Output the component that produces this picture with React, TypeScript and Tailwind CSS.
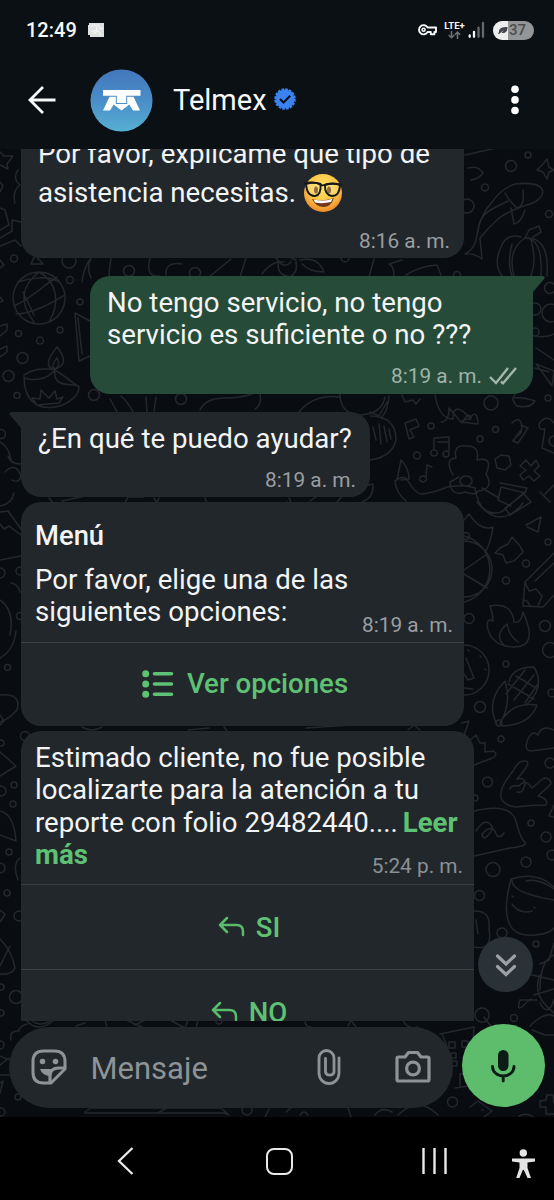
import type { ReactNode } from 'react';

function StatusBar() {
  return (
    <div className="flex h-[60px] items-center pl-[26px] pr-[20px]">
      <span className="w-[52px] whitespace-nowrap text-[20px] font-medium leading-6">12:49</span>
      <svg className="ml-[10px]" width="17" height="16" viewBox="0 0 17 16">
        <path d="M1 1h15v14H2v-2H0V3h1z" fill="#e0e1e1" />
        <path d="M2 4l6-1 1 5-6 2M10 2l2 5 3-1M5 12l5-3 3 4" stroke="#f4f4f4" strokeWidth="1.2" fill="none" />
      </svg>
      <svg className="ml-auto" width="20" height="14" viewBox="0 0 20 14" fill="none" stroke="#f5f6f7">
        <path d="M9.6 4.5H18V9h-1.6v2.3h-3.6V9H9.6A4.6 4.6 0 1 1 9.6 4.5Z" strokeWidth="1.9" strokeLinejoin="round" />
        <circle cx="5.6" cy="6.8" r="1.5" strokeWidth="1.6" />
      </svg>
      <div className="ml-[5px] flex w-[23px] flex-col items-center">
        <span className="text-[9.5px] font-bold leading-[10px]">LTE+</span>
        <svg width="13" height="8" viewBox="0 0 13 8" fill="none" stroke="#6f7376" strokeWidth="1.5">
          <path d="M3.5 0v6.5M.7 4l2.8 2.8L6.3 4M9.5 8V1.2M6.9 3.8l2.6-2.7 2.7 2.7" />
        </svg>
      </div>
      <svg className="ml-[2px]" width="17" height="18" viewBox="0 0 17 18" strokeWidth="2.3" strokeLinecap="round">
        <path d="M1.7 14.5v1.3M6 10.8v5" stroke="#f5f6f7" />
        <path d="M10.5 6.6v9.2M15 2v13.8" stroke="#66696c" />
      </svg>
      <div className="ml-[8px] flex h-[19px] w-[41px] items-center overflow-hidden rounded-full bg-[#939596] text-[#4b4e50]">
        <div className="flex h-full w-[15px] items-center justify-end bg-[#eceded]">
          <svg width="10" height="9" viewBox="0 0 10 9">
            <path d="M1 6C1 2 4 1 9.5 1 9.5 5 8 7.5 3.5 7L6 4 1 8H0z" fill="#42464a" />
          </svg>
        </div>
        <span className="pl-[1px] text-[15px] font-medium leading-[19px]">37</span>
      </div>
    </div>
  );
}

function Header() {
  return (
    <header className="flex h-[89px] items-center pb-[9px] pl-[28px]">
      <svg width="28" height="28" viewBox="0 0 28 28" fill="none" stroke="#f7f8f8" strokeWidth="2.8">
        <path d="M27.5 14H2M15 1L2 14l13 13" />
      </svg>
      <svg className="ml-[34px]" width="63" height="63" viewBox="0 0 63 63">
        <defs>
          <linearGradient id="avatar" x1="0" y1="0" x2="0" y2="1">
            <stop offset="0" stopColor="#4377bd" />
            <stop offset="0.5" stopColor="#4a8dc8" />
            <stop offset="1" stopColor="#56b0d3" />
          </linearGradient>
        </defs>
        <circle cx="31.5" cy="31.5" r="31" fill="url(#avatar)" />
        <path d="M13 21h37.5v5.7H36.2V34h-9.4v-7.3H13z" fill="#fff" />
        <path d="M19.5 27.8h6.3V35h11.400v-7.200h6.300L50 41.500h-7L39.300 35.500l-7.800 6-7.800-6L20 41.500h-7z" fill="#fff" />
      </svg>
      <h1 className="ml-[20px] w-[97px] whitespace-nowrap text-[29px] font-normal leading-9">Telmex</h1>
      <svg className="ml-[4px] mt-[-3px]" width="22" height="22" viewBox="0 0 22 22">
        <circle cx="11" cy="11" r="9.6" fill="#3b82f0" />
        <circle cx="11" cy="11" r="9.7" fill="none" stroke="#3b82f0" strokeWidth="2.2" strokeDasharray="2.6 1.21" />
        <path d="M6 11l3.5 3.5 6.7-6.8" fill="none" stroke="#0c1116" strokeWidth="2.1" />
      </svg>
      <svg className="ml-auto mr-[35px]" width="8" height="30" viewBox="0 0 8 30" fill="#fff">
        <circle cx="4" cy="4.2" r="3.8" />
        <circle cx="4" cy="14.9" r="3.8" />
        <circle cx="4" cy="25.5" r="3.8" />
      </svg>
    </header>
  );
}

const dots: [number, number, number][] = [
  [14, 258.5, 3.5], [69, 261, 7], [70, 280, 3.5], [80, 302, 3], [129, 271, 5.5], [195, 273, 5.5],
  [18.5, 333.5, 3], [40, 340.5, 3.5], [60, 330, 3], [22.5, 358, 5.5], [8.5, 376, 5.5], [17, 395.5, 3],
  [94, 395, 5.5], [181, 399, 5.5], [345, 258, 4], [457, 275, 3.5], [511, 166, 5.5], [528, 155, 3],
  [485, 187.5, 3.5], [549, 214, 3.5], [467, 206, 7], [550, 288, 5.5], [551, 313, 9], [535, 309, 6],
  [535, 332, 4], [491, 403, 7], [548, 398, 3], [431, 426, 3], [417, 455.5, 3.5], [480, 439, 3],
  [495.5, 429.5, 3], [548, 542, 3], [526, 563.5, 3.5], [506, 580.5, 3.5], [469, 618.5, 5],
  [545, 626, 5.5], [550, 650, 7.5], [506, 664, 3], [480, 707, 5.5], [466, 536, 3.5],
  [1, 434, 4.5], [0, 573, 5], [20, 571, 4], [20, 616, 3.5], [7.5, 667.5, 3], [25, 736, 4.5],
  [1, 743, 3], [14, 785, 3], [13, 804, 3], [1, 791, 5], [9, 852, 3], [0, 868, 5], [7, 893, 3],
  [19, 916, 5], [1, 987, 3], [16, 997, 6.5], [1, 1013, 3], [0, 1045, 4], [18, 1097, 3], [1, 1112, 4],
  [247, 1110, 5], [219, 1021, 3], [501, 739, 3], [487.5, 782, 5], [475, 798, 3], [550, 763, 5],
  [531, 823, 3], [546, 837, 5], [526, 862, 5], [493, 869.5, 7], [479.5, 895.5, 5], [502, 933, 5],
  [536, 944, 3], [514, 1018, 3.5], [452.5, 1102, 5], [499, 723, 3], [552, 855, 5], [552, 693, 4],
];

const doodles = [
  // star, fish tail and leaves down the left edge
  'M0 152L4 156 13 156 7 164 8 169 0 165M0 182L3 186 0 192M0 208L5 210 9 225 0 230M0 238L12 231 12 220 21 222M0 246L15 240 21 246M18 170q-6 8 2 15q-8 6-5 18',
  'M0 260l4 5-4 3M31 264l4-9 8 9-4 0-8 0M0 297l3 4-3 1M0 326l7-2v6l-7 6M0 349l7-3v6l-7 5',
  // globe
  'M39 272a26 26 0 1 0 .1 0M18 282C30 278 48 275 59 282M14 306C32 298 45 284 57 277M16 314C33 314 53 302 65 295M39 272C22 285 18 302 34 322M39 272C58 282 60 304 49 322M23 292l11 23',
  'M90 321L75 313 79 361 90 356M78 318l4 36',
  // diya lamp
  'M57 347C48 358 44 368 55 369C66 366 66 358 57 347M57 358q-7 8-2 11q6-3 2-11M24 375C38 366 46 370 53 369C60 372 74 384 79 387C79 407 24 425 24 377C25 380 45 383 55 370C52 390 75 382 79 387M32 398l8 1 1-9 8 8 6-7 2 8 6-2-4 6-22 2z',
  'M82 282Q84 266 91 258M111 258q-2 14-2 20M91 258q-5 10 0 20M150 258q-5 19 9 18M166 275q-1-14 16-11M209 277l22-18M240 277l6-19M262 274q10-14 22-12',
  'M296 260q-10-6-20-2q8 12 15 4M300 260q18-4 24 12q-14 0-22-8M296 262q2 10-5 14M291 277q-16-2-12-16M369 277l5-18M394 276q0-10-5-12l13-4M406 275q14-9 31-10l4 10',
  // koi fish and pumpkin
  'M465 155L523 142M468 168q10-3 15 5q-4 6-12 7M465 254Q476 248 477 235Q480 215 492 202Q502 188 515 184C550 180 548 198 530 204Q510 210 499 218Q488 228 480 238L482 259Q474 253 465 254M505 193q4 8 12 15q8-2 6-18M511 208l3 16q7-1 11-14M478 232q0-16 16-24l14-7',
  'M521 237q-15-4-20 10Q493 264 502 276M525 238q-18 12-11 38M525 238q18 0 16 38M525 238q25-2 22 38M525 238L529 230 539 226 541 232 533 237M512 244q-5 20 0 32M531 240q6 20 0 36M543 164l4-5 2 8 5 3-5 2-2 7-4-7-6-2z',
  'M535 336q12 2 19-2M536 348l18 12M536 364l18 7-2 15-7-10zM535 368l14 4',
  // shells and cup between bubbles
  'M117 412l-7-13M121 396q7 6 12 16M147 412l-1-15M156 397l-2 14M200 410q6-12 24-12q17 0 28-4M260 394q2 11-5 15M299 412q15-18 40-15M340 394q0 20 20 21q22-1 25-18M389 396q-1 15-8 22M370 412l9 4 8-14M402 395l3 7 8-2 3 4 4-5',
  'M435 395q4 24 18 24q0-20 18 0q-10 0-9 4q6-11 9-6q6-8 7 7l-17-2-12-14q0 14-8 14M515 398q8-1 20 3q-5 8-18 5q-7-7-2-11',
  'M370 416q26 0 26 24q-4 17-26 20M373 427l3 13M379 424l2 20M384 426l3 16M389 429l2 10',
  // music notes, squiggles and chef
  'M405 423l11-4 3 7-9 4 4 7-5 2zM434 450v-12l15-1v14M438 442h11M434 450a3.5 3 0 1 0 .1 0M446 451a3 3 0 1 0 .1 0M426 477l1-12 5 2M423 476a3.5 3 0 1 0 .1 0',
  'M512 423q8-8 10 3l-1 7-8 7M521 430l-8 11 5 2 10-15-7-3M501 455l8 1 2 9-6 5-8-2-2-9zM520 466l6-6 5 6 5-6 3 6-5 5 6 5-6 5-5-5-6 4-3-5 6-5zM554 423q-8-10-15 1q0 7 6 5l-3 19 12 5M554 436a5 5 0 1 0 .1 10M545 494l9-9M540 492l10 10',
  'M453 475q-9-16 3-17q-3-14 10-12q14-1 11 14q17-4 9 14q9 15-8 17q-2 5-13 1q-14 5-15-10l9-5M466 476a6 5 0 1 0 .1 0M397 480l4-20q8 8 8 19l-8 1M395 481q9-7 13 0q8 14 15 13q13-2 24-7q16-3 28 1q3 20 14 24q9 3 15-2l22-19M395 481q1 12 11 20M477 502q12 15 23 15q12 0 23-14M482 488l17 10M500 483l27 5-2 5-24-6-3 13 13 6M505 508l19-14 7 8-21 13z',
  'M464 520l5-6q12 18 24 13q-2 14-7 24M464 536a34 34 0 0 1 0 66M464 541a28 28 0 0 1 0 56M464 570l22-15M464 574l23 14M526 525l15-8-3 15-11-5M500 548l8-4 4-7 8 9 3 6-9 9-8 2-3-8-8-2z',
  // pencil, flame, clock and corn
  'M554 553l-29 29-2 24 20 1 11-12M525 582l4 9 7-2 6 7-4 10M535 581l19-18M523 600q6 0 7 7M490 606q22-4 24 16q7 2 9-10q16 35-9 35q-25-1-27-23q1-6 6-3q0-8-3-15M505 646q-12-10 2-22q2 12 11 18',
  'M464 645a25 25 0 0 1 0 50M464 688l9 1M466 658l8 20-6 2-6-9M468 650l1 1M480 656l1 1M485 669l1 1',
  'M497 725q-12-24 8-44q7 22-5 43M500 723q12-22 37-18q-7 20-35 21zM509 682q3-15 25-15q12 20-8 38M508 684l26 15M516 676l20 12M514 700l20-25M525 703l12-18M506 694l19-24',
  // left strip below the third bubble
  'M5 472q8-8 13-2l3 6q-2 8-9 4M0 442q9 5 11 18M21 464q-11 0-13-8M0 506q12-2 14-13M0 512l8-1 13 18M0 524l4 5 5-3 12 9M0 560l21-4M11 583q7 1 9 9M0 600q15 10 10 35M0 658q14-8 16-27M0 695q22-2 17 15q-8 9-17 12M0 715l4 6-4 4M0 752l16 14-16 10M0 811q14 3 16 30l-16-6M20 858q-8 6-2 22M0 910l5 4-5 8M0 939q12 12 15 29q-3 7-15 6M0 966l10-20M0 1065l9-7M0 1075h9M0 1083l3-2-3 12M11 1040q-2-10 8-9q-1-4 8-7M9 1060l-9-4',
  'M49 498l4 5M62 501l23-5M125 503l3-6 16 0M154 498l3 5 2-5M205 498l2 5M289 498q4 6-2 4M310 501l20-14q18-9 16 5l-9 10M352 490l20-6M362 502q12-4 11-18M82 727q10 6 20 0M188 730l21-2M224 727l3 4M306 728l46-3M408 730l6-5 6 5',
  // hands, hat and mug on the right strip
  'M462 723l7-2-6 17M470 740l6-5 4 8 5 0 0 9 9-1q5 5-4 8l-16 6M530 751q-7-2-1-14q4-7 9-2q4-11 16-5M554 748q-15 2-24 3M524 761q-6 0-11 10q-26 32 3 36q14-2 30-2q3-6-8-9l13-12q0-6-7-6l-12 10q-7-10-13-2q-8-1-9 3M524 761q10-1-7 18q8-2 8 5q-2 10-8 8',
  'M474 811q33-8 41 7q6 22 9 23q6 5-14 7L474 856M476 831q10-16 17-3q-9 16-11 6q11-12 15 2q4 2 7-3M554 805l-5 11 5 1',
  'M511 879q-16 60 24 56q14-1 19-7M511 879q26-8 43 8M512 880q-1 13 42 20M526 881q12-3 28 8M512 904q8 11 20 7M512 896l1 1M534 907l1 1M474 911q17-1 15 18q4 22-15 18M476 920l2 14',
  'M554 943l-5 17-9 4M540 990q0-30 14-35M532 975l22 5M534 995l20-6M540 975q-9 20 14 38M520 1000q-5 15 7 2l4-3M484 1017l9 12M482 1008a7 7 0 1 0 .1 0',
  // bottom strip around the composer
  'M26 1020q12 14 28 0M31 1020q10 8 20 0M76 1026l9-3M105 1020l2 8M126 1020l18 8M134 1025l12-5M170 1020l15 8 3-8M198 1020l-2 8M305 1021q0 6 6 6M348 1026l3-6 5 7M403 1020q4 10 15 7M85 1112l6-4h130l8 7-5-2H85M158 1113l10-6M265 1117l4-8M286 1112l6-5M348 1108l3 9M375 1115q7-9 17-3M398 1115q20-20 40 0M300 1115q4-6 8 0',
  'M440 1034l34-7-1 15M442 1034q5 10 7 20M449 1042h6v6h-6zM462 1041h6v6h-6zM451 1053h5v5h-5zM452 1061h5v5h-5M455 1088l13-2M460 1086v-12h5M530 1026q15-15 24-10M532 1030l13 5 9 0M540 1003q8 15 14-3M537 1000l-17 0',
  'M470 1107l8-6 14 10-8 6M540 1101l6-1 1-5 6 0 1 8M540 1101v6l6 0v7l8 0M519 1116q8-4 14 1M482 1110h1',
];

function Wallpaper() {
  return (
    <svg
      className="absolute inset-0"
      width="554"
      height="968"
      viewBox="0 149 554 968"
      fill="none"
      stroke="#24282c"
      strokeWidth="1.5"
      strokeLinejoin="round"
      strokeLinecap="round"
    >
      {dots.map(([x, y, r], i) => (
        <circle key={i} cx={x} cy={y} r={r} />
      ))}
      {doodles.map((d, i) => (
        <path key={i} d={d} />
      ))}
    </svg>
  );
}

function NerdEmoji() {
  return (
    <svg width="40" height="40" viewBox="0 0 40 40">
      <defs>
        <radialGradient id="face" cx="0.5" cy="0.35" r="0.65">
          <stop offset="0" stopColor="#fde46b" />
          <stop offset="0.6" stopColor="#fcc545" />
          <stop offset="1" stopColor="#ee8a2b" />
        </radialGradient>
      </defs>
      <circle cx="20" cy="20" r="19" fill="url(#face)" />
      <ellipse cx="13" cy="17" rx="2" ry="3.5" fill="#6b421b" />
      <ellipse cx="26" cy="17" rx="2" ry="3.5" fill="#6b421b" />
      <path d="M9 26q11 3 22-1-3 9-10.5 9T9 26Z" fill="#70351a" />
      <path d="M10.5 26.5q10 2.5 19-.8l-1.5 3.3q-8 2-16 .5Z" fill="#fff" />
      <g fill="#fff6c0" fillOpacity=".25" stroke="#17191b" strokeWidth="1.9">
        <path d="M3 11q7-2.5 14.5 0 1 11-5.5 12Q4 23.5 3 11ZM22 12q8-2.5 15 0-.5 11-8 11Q21.5 22 22 12Z" />
        <path d="M1 10.5q10-3 18.5 2 9-4 19.5-.5" fill="none" />
      </g>
    </svg>
  );
}

function Time({ children, color = 'text-[#9a9ea1]' }: { children: ReactNode; color?: string }) {
  return <span className={`whitespace-nowrap text-[20.8px] leading-6 ${color}`}>{children}</span>;
}

function QuickReply({ label }: { label: string }) {
  return (
    <button className="flex h-[84px] w-full shrink-0 items-center justify-center gap-[11px] pl-[3px] pt-[2px] text-[27.6px] font-medium leading-8 text-[#5fc173]">
      <svg className="-mt-[3px]" width="27" height="22" viewBox="0 0 27 22" fill="none" stroke="#5abb6c" strokeWidth="2.5" strokeLinecap="round" strokeLinejoin="round">
        <path d="M9 2L2 9l7 7M2 9h16.5q6.5 0 6.5 6.5V19" />
      </svg>
      {label}
    </button>
  );
}

function Messages() {
  return (
    <div className="relative flex h-[871.5px] flex-col items-start overflow-hidden text-[27.65px] leading-[32.4px] text-[#f2f4f5]">
      <div className="ml-[21px] h-[109px] w-[443px] shrink-0 rounded-b-[20px] bg-[#22272b] pl-[17px] pr-[14px]">
        <p className="-mt-[11px] whitespace-nowrap">Por favor, explícame que tipo de</p>
        <div className="mt-[3px] flex h-[40px] items-center gap-[7px]">
          <span className="whitespace-nowrap">asistencia necesitas.</span>
          <NerdEmoji />
        </div>
        <div className="mt-[16px] flex justify-end">
          <Time>8:16 a. m.</Time>
        </div>
      </div>

      <div className="relative ml-[90px] mt-[18px] h-[118px] w-[443px] shrink-0 rounded-[20px] rounded-tr-none bg-[#264b39] pl-[17px] pr-[16px] pt-[11px]">
        <svg className="absolute -right-[12px] top-0" width="13" height="20" viewBox="0 0 13 20">
          <path d="M0 0h11q3 1 1 3L1 16v4H0z" fill="#264b39" />
        </svg>
        <p className="whitespace-nowrap">No tengo servicio, no tengo<br />servicio es suficiente o no ???</p>
        <div className="mt-[12px] flex items-center justify-end gap-[7px]">
          <Time color="text-[#9fb3a9]">8:19 a. m.</Time>
          <svg width="28" height="18" viewBox="0 0 28 18" fill="none" stroke="#a3b5ac" strokeWidth="2.4">
            <path d="M1 10l6 6L19 1M12 14.5l2 1.8L27 1" />
          </svg>
        </div>
      </div>

      <div className="relative ml-[21px] mt-[18px] h-[85px] w-[349px] shrink-0 rounded-[20px] rounded-tl-none bg-[#22272b] pl-[17px] pr-[14px] pt-[11px]">
        <svg className="absolute -left-[12px] top-0" width="13" height="20" viewBox="0 0 13 20">
          <path d="M13 0H2q-3 1-1 3l11 13v4h1z" fill="#22272b" />
        </svg>
        <p className="whitespace-nowrap">¿En qué te puedo ayudar?</p>
        <div className="mt-[13px] flex justify-end">
          <Time>8:19 a. m.</Time>
        </div>
      </div>

      <div className="ml-[21px] mt-[5px] h-[224px] w-[443px] shrink-0 rounded-[20px] bg-[#22272b]">
        <div className="h-[141px] border-b-[1.5px] border-[#3b4044] pl-[14px] pr-[11px] pt-[18px]">
          <h2 className="text-[27.4px] font-medium leading-8">Menú</h2>
          <div className="mt-[12px] flex h-[73px] justify-between">
            <p className="whitespace-nowrap">Por favor, elige una de las<br />siguientes opciones:</p>
            <div className="-ml-6 flex items-end">
              <Time>8:19 a. m.</Time>
            </div>
          </div>
        </div>
        <button className="flex h-[82px] w-full items-center justify-center gap-[13px] pl-[5px] text-[27.6px] font-medium leading-8 text-[#5fc173]">
          <svg width="32" height="28" viewBox="0 0 32 28" fill="#5fc173">
            <circle cx="3.7" cy="3.7" r="3.5" />
            <circle cx="3.7" cy="14" r="3.5" />
            <circle cx="3.7" cy="24.3" r="3.5" />
            <path d="M12.5 3.7h17M12.5 14h17M12.5 24.3h17" stroke="#5fc173" strokeWidth="3.6" strokeLinecap="round" />
          </svg>
          <span className="whitespace-nowrap">Ver opciones</span>
        </button>
      </div>

      <div className="ml-[21px] mt-[5px] w-[453px] shrink-0 rounded-t-[20px] bg-[#22272b]">
        <div className="h-[154px] border-b-[1.5px] border-[#3b4044] pl-[14px] pr-[11px] pt-[11px]">
          <p className="whitespace-nowrap">
            Estimado cliente, no fue posible<br />
            localizarte para la atención a tu<br />
            reporte con folio 29482440.... <b className="-ml-[2px] font-bold text-[#5fc173]">Leer</b><br />
            <b className="font-bold text-[#5fc173]">más</b>
          </p>
          <div className="-mt-[18px] flex justify-end">
            <Time color="text-[#8b9094]">5:24 p. m.</Time>
          </div>
        </div>
        <div className="border-b-[1.5px] border-[#3b4044]">
          <QuickReply label="SI" />
        </div>
        <QuickReply label="NO" />
      </div>
    </div>
  );
}

function Composer() {
  return (
    <div className="relative mt-[3px] flex items-center gap-[8.5px] pl-[9px]">
      <div className="mt-[3px] flex h-[81px] w-[444px] items-center rounded-full bg-[#22272b] pl-[22px] pr-[22px]">
        <svg width="36" height="36" viewBox="0 0 36 36" fill="none" stroke="#8d9397" strokeWidth="3">
          <path d="M12.5 2h11Q34 2 34 12.5V20L20 34h-7.5Q2 34 2 23.5v-11Q2 2 12.5 2Z" />
          <path d="M33.5 19H28q-9 0-9 8v6.5" strokeWidth="3.2" />
          <path d="M9 20h16q-5 2-5.5 7Q11 26.5 9 20Z" fill="#8d9397" stroke="none" />
          <circle cx="11.5" cy="12.5" r="2.8" fill="#8d9397" stroke="none" />
          <circle cx="24.5" cy="12.5" r="2.8" fill="#8d9397" stroke="none" />
        </svg>
        <span className="ml-[23.5px] pt-[3px] text-[31px] leading-9 text-[#8d9397]">Mensaje</span>
        <svg className="ml-auto" width="24" height="36" viewBox="0 0 24 36" fill="none" stroke="#8d9397" strokeWidth="2.8" strokeLinecap="round">
          <path d="M22 9v15a10 10.5 0 0 1-20 0V9a7.5 7.5 0 0 1 15 0v14.5a4.5 4 0 0 1-8.5 0V9.5" />
        </svg>
        <svg className="ml-[54px]" width="36" height="34" viewBox="0 0 36 34" fill="none" stroke="#8d9397" strokeWidth="3.2">
          <path d="M3.5 7H10l3.5-4.5h9L26 7h6.5q1.5 0 1.5 1.5v21q0 1.5-1.5 1.5h-29Q2 31 2 29.5v-21Q2 7 3.5 7Z" strokeLinejoin="round" />
          <circle cx="18" cy="18.5" r="6.4" />
        </svg>
      </div>
      <button className="flex size-[83px] items-center justify-center rounded-full bg-[#5dbd6c]">
        <svg width="26" height="34" viewBox="0 0 26 34" fill="none" stroke="#0d1b16" strokeLinecap="round">
          <rect x="8" y="1" width="10.5" height="21" rx="5.2" fill="#0d1b16" stroke="none" />
          <path d="M2.5 17.5a10.7 9.5 0 0 0 21.5 0M13.2 28v4" strokeWidth="2.9" />
        </svg>
      </button>
    </div>
  );
}

function SystemNav() {
  return (
    <nav className="flex h-[83px] items-center bg-black pl-[117px] pt-[5px]">
      <svg width="17" height="30" viewBox="0 0 17 30" fill="none" stroke="#e9e9e9" strokeWidth="2.3">
        <path d="M15.5 2L2 15l13.5 13" />
      </svg>
      <div className="ml-[132px] size-[27px] rounded-[8px] border-2 border-[#e9e9e9]" />
      <svg className="ml-[129px]" width="27" height="26" viewBox="0 0 27 26" stroke="#e9e9e9" strokeWidth="2.4">
        <path d="M1.5 0v26M12.5 0v26M23.5 0v26" />
      </svg>
      <svg className="ml-[62px] mt-[5px]" width="25" height="30" viewBox="0 0 25 30" fill="#e4e4e4">
        <circle cx="12.3" cy="4" r="3.7" />
        <path d="M1 9.5h23v3l-7.5 1V19l3.5 10h-3.5l-3.7-8h-1l-3.3 8H5.2L8.5 19v-5.5L1 12.5z" />
      </svg>
    </nav>
  );
}

export default function App() {
  return (
    <div className="flex h-[1200px] w-[554px] flex-col overflow-hidden bg-[#0b1014] font-[Roboto,sans-serif] text-[#f7f8f8]">
      <StatusBar />
      <Header />
      <main className="relative h-[968px] shrink-0 overflow-hidden bg-[#090d11]">
        <Wallpaper />
        <Messages />
        <Composer />
        {/* scroll-to-bottom button */}
        <button className="absolute left-[478px] top-[788px] flex size-[55px] items-center justify-center rounded-full bg-[#2a3238]">
          <svg width="22" height="24" viewBox="0 0 22 24" fill="none" stroke="#9ba1a5" strokeWidth="3.2" strokeLinecap="round">
            <path d="M2.5 3l8.5 8 8.5-8M2.5 13.5l8.5 8 8.5-8" />
          </svg>
        </button>
      </main>
      <SystemNav />
    </div>
  );
}
